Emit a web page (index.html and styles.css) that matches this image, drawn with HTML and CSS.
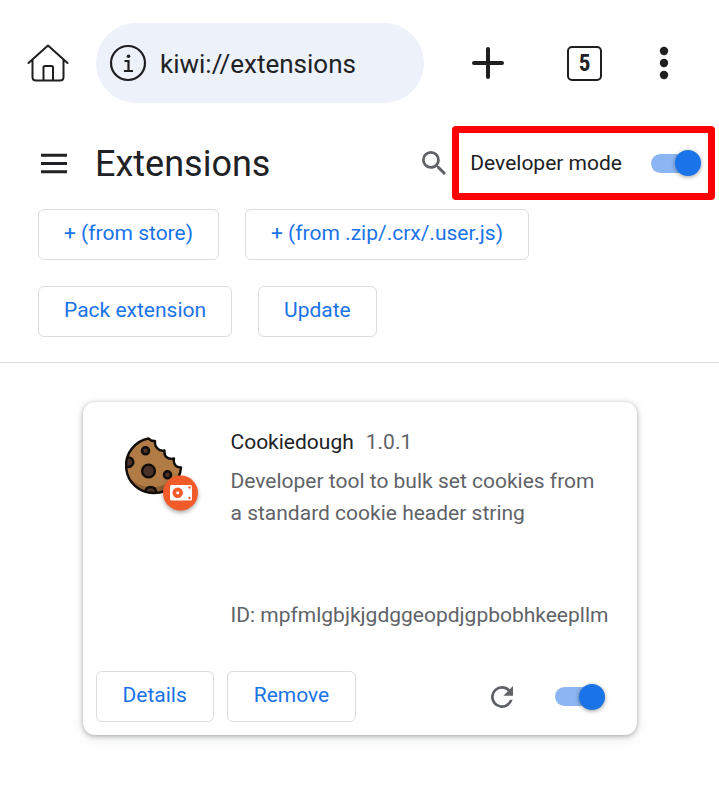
FILE: index.html
```html
<!DOCTYPE html>
<html lang="en">
<head>
<meta charset="utf-8">
<meta name="viewport" content="width=device-width, initial-scale=1">
<title>Extensions</title>
<link rel="stylesheet" href="styles.css">
</head>
<body>
<header class="browser-bar">
  <button class="icon-button" aria-label="Home">
    <svg width="42" height="40" viewBox="0 0 42 40" fill="none" stroke="#1f1f21" stroke-width="2" stroke-linecap="round" stroke-linejoin="round"><path d="M1.500 20 21 2.500 40.500 20M5.500 17v17q0 3.500 3.500 3.500h24q3.500 0 3.500-3.500V17M16.500 37V24.500q0-1.500 1.500-1.500h6.500q1.500 0 1.500 1.500V37"/></svg>
  </button>
  <label class="address">
    <svg width="38" height="38" viewBox="0 0 38 38" fill="none" stroke="#1f1f21" stroke-width="2.200"><circle cx="19" cy="19" r="17"/><path d="M15.500 17h4v10M15 27h9" /><circle cx="19.500" cy="12.200" r="1.800" fill="#1f1f21" stroke="none"/></svg>
    <input class="address-input" type="text" value="kiwi://extensions" aria-label="Address">
  </label>
  <div class="browser-actions">
    <button class="icon-button" aria-label="New tab">
      <svg width="34" height="34" viewBox="0 0 34 34" fill="none" stroke="#1f1f21" stroke-width="4" stroke-linecap="round"><path d="M17 3v28M3 17h28"/></svg>
    </button>
    <button class="tab-count" aria-label="Open tabs">5</button>
    <button class="icon-button" aria-label="More options">
      <svg width="10" height="36" viewBox="0 0 10 36" fill="#1f1f21"><circle cx="5" cy="6" r="4.200"/><circle cx="5" cy="18" r="4.200"/><circle cx="5" cy="30" r="4.200"/></svg>
    </button>
  </div>
</header>

<div class="page-bar">
  <button class="icon-button" aria-label="Main menu">
    <svg width="26" height="22" viewBox="0 0 26 22" fill="#202124"><path d="M0 1.800h26v3H0zM0 10h26v3H0zM0 18.200h26v3H0z"/></svg>
  </button>
  <h1 class="page-title">Extensions</h1>
  <button class="icon-button search" aria-label="Search extensions">
    <svg width="24" height="24" viewBox="3 3 17.490 17.490" fill="#5f6368"><path d="M15.500 14h-.79l-.28-.27A6.470 6.470 0 0 0 16 9.500 6.500 6.500 0 1 0 9.500 16c1.610 0 3.090-.59 4.230-1.570l.27.28v.79l5 4.990L20.490 19zm-6 0a4.500 4.500 0 1 1 0-9 4.500 4.500 0 0 1 0 9z"/></svg>
  </button>
  <label class="dev-mode">
    <span>Developer mode</span>
    <input class="toggle" type="checkbox" checked>
  </label>
</div>

<nav class="tools" aria-label="Developer tools">
  <button class="button">+ (from store)</button>
  <button class="button">+ (from .zip/.crx/.user.js)</button>
  <button class="button">Pack extension</button>
  <button class="button">Update</button>
</nav>

<main class="list">
  <article class="card">
    <div class="card-body">
      <svg class="card-icon" width="80" height="84" viewBox="0 0 80 84" aria-hidden="true">
        <path d="M23.500 3.500q2.500 3 6.500 2.500-.5 5 2 7 3 3.500 7.500 2.500-.5 5 2.500 7 3 2 7 1-1 5 2 7.500 2 1.500 5 1.500A27.500 27.500 0 1 1 23.500 3.500z" fill="#b17b45"/>
        <path d="M5 44q12 10 26 8 16-2 24-13-1 18-23 20-18 1-27-15z" fill="#8e5e34"/>
        <g fill="#4a3129" stroke="#100c09" stroke-width="2.400"><circle cx="20.500" cy="15.800" r="3.600"/><circle cx="23.500" cy="36" r="6.400"/><circle cx="42.500" cy="39.800" r="3.600"/><path d="M2.500 22.500a4.800 4.800 0 1 1-1 9M20.500 57.500q0-5.500 5-5.500t6 5.500"/></g>
        <path d="M23.500 3.500q2.500 3 6.500 2.500-.5 5 2 7 3 3.500 7.500 2.500-.5 5 2.500 7 3 2 7 1-1 5 2 7.500 2 1.500 5 1.500A27.500 27.500 0 1 1 23.500 3.500z" fill="none" stroke="#100c09" stroke-width="2.400" stroke-linejoin="round"/>
        <circle class="badge" cx="55.500" cy="58" r="17.500" fill="#f15a29"/>
        <rect x="45" y="50" width="22" height="15.500" rx="1.500" fill="#fff"/>
        <circle cx="52.700" cy="57.800" r="5.200" fill="#f15a29"/><circle cx="52.700" cy="57.800" r="1.500" fill="#fff"/>
        <g fill="#f15a29"><circle cx="64.500" cy="52.500" r="1.200"/><circle cx="64.500" cy="63" r="1.200"/></g>
      </svg>
      <div class="card-text">
        <div class="card-heading"><h2 class="card-name">Cookiedough</h2><span>1.0.1</span></div>
        <p class="description">Developer tool to bulk set cookies from a standard cookie header string</p>
        <p class="extension-id">ID: mpfmlgbjkjgdggeopdjgpbobhkeepllm</p>
      </div>
    </div>
    <div class="card-actions">
      <button class="button">Details</button>
      <button class="button">Remove</button>
      <button class="icon-button reload" aria-label="Reload">
        <svg width="22" height="22" viewBox="4 4 16 16" fill="#5f6368"><path d="M17.650 6.350A7.950 7.950 0 0 0 12 4a8 8 0 1 0 7.730 10h-2.080A6 6 0 1 1 12 6c1.660 0 3.140.69 4.220 1.780L13 11h7V4z"/></svg>
      </button>
      <input class="toggle" type="checkbox" aria-label="Enable Cookiedough" checked>
    </div>
  </article>
</main>
</body>
</html>
```
FILE: styles.css
```css
* {
  box-sizing: border-box;
}

body {
  margin: 0;
  background: #fff;
  color: #202124;
  font: 21px/32px Roboto, sans-serif;
}

h1, h2, p {
  margin: 0;
  font-weight: 400;
}

button, input {
  font: inherit;
  color: inherit;
}

svg {
  display: block;
}

.icon-button {
  padding: 0;
  border: 0;
  background: none;
}

.browser-bar {
  display: flex;
  align-items: center;
  gap: 27px;
  padding: 23px 50px 23px 27px;
}

.address {
  display: flex;
  flex: 1;
  align-items: center;
  gap: 13px;
  min-width: 0;
  height: 80px;
  padding: 0 13px;
  border-radius: 40px;
  background: #ecf1fa;
}

.address svg {
  flex: none;
}

.address-input {
  flex: 1;
  min-width: 0;
  padding: 2px 0 0;
  border: 0;
  outline: 0;
  background: none;
  font-size: 26px;
}

.browser-actions {
  display: flex;
  align-items: center;
  gap: 57px;
  padding-left: 20px;
}

.tab-count {
  width: 35px;
  height: 35px;
  margin-left: 5px;
  padding: 0;
  border: 2px solid #1f1f21;
  border-radius: 5px;
  background: none;
  font-family: "Roboto Condensed", Roboto, sans-serif;
  font-size: 23px;
  font-weight: 700;
  line-height: 31px;
}

.page-bar {
  display: flex;
  align-items: center;
  padding: 0 4px 0 41px;
}

.page-title {
  margin-left: 28px;
  padding-top: 2px;
  font-size: 36px;
  line-height: 48px;
}

.search {
  margin: 0 6px 0 auto;
}

.dev-mode {
  display: flex;
  align-items: center;
  gap: 29px;
  height: 74px;
  padding: 0 7px 0 11px;
  border: 7px solid #f00;
  border-radius: 4px;
}

.toggle {
  display: grid;
  align-items: center;
  flex: none;
  appearance: none;
  width: 50px;
  height: 26px;
  margin: 0;
}

.toggle::before,
.toggle::after {
  content: "";
  grid-area: 1 / 1;
}

.toggle::before {
  width: 43px;
  height: 19px;
  border-radius: 10px;
  background: #8cb6f3;
}

.toggle::after {
  justify-self: end;
  width: 26px;
  height: 26px;
  border-radius: 50%;
  background: #1a73e8;
  box-shadow: 0 1px 4px rgba(0, 0, 0, .4);
}

.tools {
  display: flex;
  flex-wrap: wrap;
  gap: 26px;
  padding: 9px 38px 25px;
  border-bottom: 1px solid #dadce0;
}

.button {
  height: 51px;
  padding: 0 25px 3px;
  border: 1px solid #dadce0;
  border-radius: 6px;
  background: #fff;
  color: #1a73e8;
}

.list {
  padding: 39px 40px;
}

.card {
  max-width: 554px;
  margin: 0 auto;
  border-radius: 12px;
  box-shadow: 0 1px 4px rgba(60, 64, 67, .4), 0 3px 12px rgba(60, 64, 67, .15);
}

.card-body {
  display: flex;
  gap: 26px;
  padding: 24px 26px 0 42px;
}

.card-icon {
  flex: none;
  margin-top: 9px;
}

.badge {
  filter: drop-shadow(0 2px 2px rgba(0, 0, 0, .35));
}

.card-text {
  min-width: 0;
  color: #5f6368;
}

.card-heading {
  display: flex;
  gap: 12px;
}

.card-name {
  color: #202124;
  font-size: 21px;
}

.description {
  min-height: 134px;
  margin-top: 7px;
  padding-right: 10px;
}

.card-actions {
  display: flex;
  align-items: center;
  gap: 13px;
  padding: 40px 32px 13px 13px;
}

.card-actions .button {
  padding: 0 26px 3px;
}

.reload {
  margin: 0 29px 0 auto;
}
```
